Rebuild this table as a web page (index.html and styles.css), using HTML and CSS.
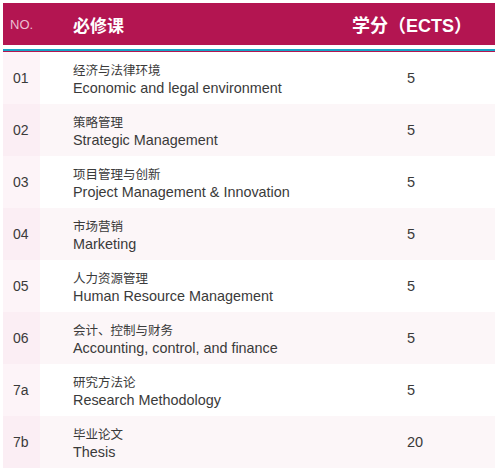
FILE: index.html
```html
<!DOCTYPE html>
<html lang="zh">
<head>
<meta charset="utf-8">
<link rel="stylesheet" href="styles.css">
</head>
<body>
<div class="table">
  <div class="head">
    <div class="c-no">NO.</div>
    <div class="c-name">必修课</div>
    <div class="c-cr">学分（ECTS）</div>
  </div>
  <div class="rule"></div>
  <div class="row"><div class="c-no">01</div><div class="c-name"><div class="zh">经济与法律环境</div><div class="en">Economic and legal environment</div></div><div class="c-cr">5</div></div>
  <div class="row alt"><div class="c-no">02</div><div class="c-name"><div class="zh">策略管理</div><div class="en">Strategic Management</div></div><div class="c-cr">5</div></div>
  <div class="row"><div class="c-no">03</div><div class="c-name"><div class="zh">项目管理与创新</div><div class="en">Project Management &amp; Innovation</div></div><div class="c-cr">5</div></div>
  <div class="row alt"><div class="c-no">04</div><div class="c-name"><div class="zh">市场营销</div><div class="en">Marketing</div></div><div class="c-cr">5</div></div>
  <div class="row"><div class="c-no">05</div><div class="c-name"><div class="zh">人力资源管理</div><div class="en">Human Resource Management</div></div><div class="c-cr">5</div></div>
  <div class="row alt"><div class="c-no">06</div><div class="c-name"><div class="zh">会计、控制与财务</div><div class="en">Accounting, control, and finance</div></div><div class="c-cr">5</div></div>
  <div class="row"><div class="c-no">7a</div><div class="c-name"><div class="zh">研究方法论</div><div class="en">Research Methodology</div></div><div class="c-cr">5</div></div>
  <div class="row alt"><div class="c-no">7b</div><div class="c-name"><div class="zh">毕业论文</div><div class="en">Thesis</div></div><div class="c-cr">20</div></div>
</div>
</body>
</html>
```
FILE: styles.css
```css
html, body {
  margin: 0;
  padding: 0;
  background: #ffffff;
}
body {
  padding: 3px;
  font-family: "Liberation Sans", Arial, "Noto Sans CJK SC", sans-serif;
  color: #3a3a3a;
}
.table {
  width: 492px;
}
.head {
  display: grid;
  grid-template-columns: 37px 287px 168px;
  height: 42px;
  background: #b31551;
  color: #ffffff;
  align-items: center;
}
.head .c-no {
  font-size: 13px;
  color: #ebbfd3;
  padding-left: 7px;
}
.head .c-name {
  font-family: "Noto Sans CJK SC", sans-serif;
  font-weight: bold;
  font-size: 17px;
  padding-left: 33px;
}
.head .c-cr {
  font-family: "Liberation Sans", "Noto Sans CJK SC", sans-serif;
  font-weight: bold;
  font-size: 18px;
  padding-left: 25px;
  white-space: nowrap;
}
.rule {
  margin-top: 4px;
  height: 2px;
  background: #16a4c6;
  border-bottom: 1px solid #b31551;
}
.row {
  display: grid;
  grid-template-columns: 37px 287px 168px;
  height: 52px;
  align-items: stretch;
  background: #ffffff;
}
.row.alt {
  background: #fcf6f8;
}
.row .c-no {
  display: flex;
  align-items: center;
  padding-left: 10px;
  font-size: 14px;
  background: #fdf4f8;
}
.row.alt .c-no {
  background: #fbeef4;
}
.row .c-name {
  display: flex;
  flex-direction: column;
  justify-content: center;
  padding-left: 33px;
  padding-top: 2px;
}
.zh {
  font-family: "Noto Sans CJK SC", sans-serif;
  font-size: 12.5px;
  line-height: 18px;
}
.en {
  font-size: 14.4px;
  line-height: 18px;
}
.row .c-cr {
  display: flex;
  align-items: center;
  padding-left: 80px;
  font-size: 14.5px;
}
```
